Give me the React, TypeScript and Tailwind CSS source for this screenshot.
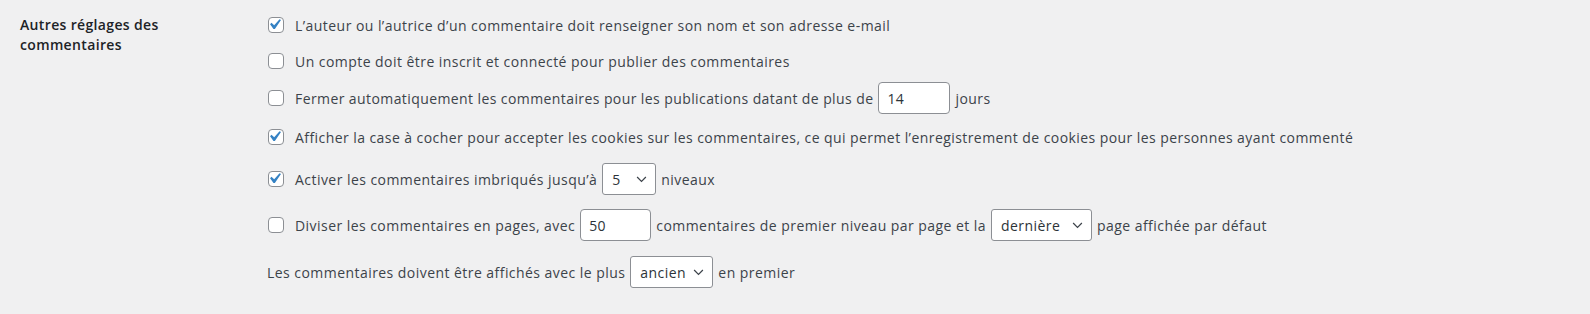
import type { ReactNode } from "react";

const font = { fontFamily: '"Open Sans", "Noto Sans", sans-serif' };

function Checkbox({ checked }: { checked?: boolean }) {
  return (
    <span className="relative inline-block h-4 w-4 shrink-0 rounded-[4px] border border-[#8c8f94] bg-white">
      {checked && (
        <svg
          viewBox="0 0 20 20"
          className="absolute left-[-5px] top-[-4px] h-[21px] w-[21px]"
        >
          <path d="M14.83 4.89l1.34.94-5.81 8.38H9.02L5.78 9.67l1.34-1.25 2.57 2.4z" fill="#3582c4" />
        </svg>
      )}
    </span>
  );
}

function NumberInput({ value, width }: { value: string; width: string }) {
  return (
    <input
      type="text"
      defaultValue={value}
      className={`${width} mx-[5px] h-[32px] rounded-[4px] border border-[#8c8f94] bg-white px-2 text-[14px] tracking-[0.3px] text-[#2c3338] outline-none`}
      style={font}
    />
  );
}

function Select({ value, width }: { value: string; width: string }) {
  return (
    <div
      className={`${width} mx-[5px] flex h-[32px] items-center justify-between rounded-[3px] border border-[#8c8f94] bg-white pl-[9px] pr-[8px] text-[14px] tracking-[0.45px] text-[#2c3338]`}
    >
      <span>{value}</span>
      <svg viewBox="0 0 12 8" className="h-[7px] w-[11px]">
        <path d="M1 1.2l5 5 5-5" fill="none" stroke="#3c434a" strokeWidth="1.4" />
      </svg>
    </div>
  );
}

function Row({ mt, h, children }: { mt: string; h: string; children: ReactNode }) {
  return <div className={`flex items-center ${mt} ${h} whitespace-nowrap tracking-[0.45px]`}>{children}</div>;
}

export default function App() {
  return (
    <div className="h-[314px] w-[1590px] bg-[#f0f0f1] text-[14px] text-[#3c434a]" style={font}>
      <div className="flex pl-5">
        <div className="w-[248px] shrink-0 pt-[15px] text-[14px] font-semibold leading-[20px] tracking-[0.35px] text-[#1d2327]">
          Autres réglages des
          <br />
          commentaires
        </div>
        <div className="flex flex-col">
          <Row mt="mt-[14px]" h="h-[22px]">
            <Checkbox checked />
            <span className="ml-[11px]">L’auteur ou l’autrice d’un commentaire doit renseigner son nom et son adresse e-mail</span>
          </Row>
          <Row mt="mt-[14px]" h="h-[22px]">
            <Checkbox />
            <span className="ml-[11px]">Un compte doit être inscrit et connecté pour publier des commentaires</span>
          </Row>
          <Row mt="mt-[10px]" h="h-[32px]">
            <Checkbox />
            <span className="ml-[11px] tracking-[0.41px]">Fermer automatiquement les commentaires pour les publications datant de plus de</span>
            <NumberInput value="14" width="w-[72px]" />
            <span>jours</span>
          </Row>
          <Row mt="mt-[12px]" h="h-[22px]">
            <Checkbox checked />
            <span className="ml-[11px] tracking-[0.43px]">
              Afficher la case à cocher pour accepter les cookies sur les commentaires, ce qui permet l’enregistrement de cookies pour les personnes ayant commenté
            </span>
          </Row>
          <Row mt="mt-[15px]" h="h-[32px]">
            <Checkbox checked />
            <span className="ml-[11px]">Activer les commentaires imbriqués jusqu’à</span>
            <Select value="5" width="w-[54px]" />
            <span>niveaux</span>
          </Row>
          <Row mt="mt-[14px]" h="h-[32px]">
            <Checkbox />
            <span className="ml-[11px]">Diviser les commentaires en pages, avec</span>
            <NumberInput value="50" width="w-[71px]" />
            <span>commentaires de premier niveau par page et la</span>
            <Select value="dernière" width="w-[101px]" />
            <span>page affichée par défaut</span>
          </Row>
          <Row mt="mt-[15px]" h="h-[32px]">
            <span className="-ml-px">Les commentaires doivent être affichés avec le plus</span>
            <Select value="ancien" width="w-[83px]" />
            <span>en premier</span>
          </Row>
        </div>
      </div>
    </div>
  );
}
